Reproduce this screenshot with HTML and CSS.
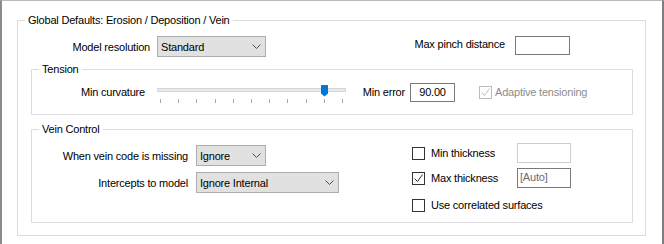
FILE: index.html
```html
<!DOCTYPE html>
<html>
<head>
<meta charset="utf-8">
<link rel="stylesheet" href="styles.css">
</head>
<body>
<div class="window">
  <div class="group main">
    <div class="group-title">Global Defaults: Erosion / Deposition / Vein</div>
    <div class="row row-top">
      <span class="lbl lbl-res">Model resolution</span>
      <div class="select sel-res"><span>Standard</span><svg viewBox="0 0 9 5"><path d="M0.5 0.5 L4.5 4.5 L8.5 0.5"/></svg></div>
      <span class="lbl lbl-pinch">Max pinch distance</span>
      <div class="input inp-pinch"></div>
    </div>
    <div class="group tension">
      <div class="group-title">Tension</div>
      <div class="row row-tension">
        <span class="lbl lbl-curv">Min curvature</span>
        <div class="slider">
          <div class="track"></div>
          <div class="ticks"><i></i><i></i><i></i><i></i><i></i><i></i><i></i><i></i><i></i><i></i><i></i></div>
          <svg class="thumb" viewBox="0 0 7 12"><path d="M0 0.5 Q0 0 0.5 0 H6.5 Q7 0 7 0.5 V8.5 L3.5 11.5 L0 8.5 Z"/></svg>
        </div>
        <span class="lbl lbl-err">Min error</span>
        <div class="input inp-err">90.00</div>
        <div class="check disabled check-adapt"><svg viewBox="0 0 11 11"><path d="M1.5 5.5 L4.5 8.5 L9.5 1.5"/></svg></div>
        <span class="chk-lbl muted">Adaptive tensioning</span>
      </div>
    </div>
    <div class="group vein">
      <div class="group-title">Vein Control</div>
      <div class="vein-body">
        <div class="vein-left">
          <div class="row vrow">
            <span class="lbl lbl-vein">When vein code is missing</span>
            <div class="select sel-ignore"><span>Ignore</span><svg viewBox="0 0 9 5"><path d="M0.5 0.5 L4.5 4.5 L8.5 0.5"/></svg></div>
          </div>
          <div class="row vrow vrow2">
            <span class="lbl lbl-vein">Intercepts to model</span>
            <div class="select sel-intercepts"><span>Ignore Internal</span><svg viewBox="0 0 9 5"><path d="M0.5 0.5 L4.5 4.5 L8.5 0.5"/></svg></div>
          </div>
        </div>
        <div class="vein-right">
          <div class="row crow">
            <div class="check"></div>
            <span class="chk-lbl thick-lbl">Min thickness</span>
            <div class="input inp-thick disabled-input"></div>
          </div>
          <div class="row crow crow2">
            <div class="check"><svg viewBox="0 0 11 11"><path d="M1.5 5.5 L4.5 8.5 L9.5 1.5"/></svg></div>
            <span class="chk-lbl thick-lbl">Max thickness</span>
            <div class="input inp-thick auto">[Auto]</div>
          </div>
          <div class="row crow crow3">
            <div class="check"></div>
            <span class="chk-lbl">Use correlated surfaces</span>
          </div>
        </div>
      </div>
    </div>
  </div>
</div>
</body>
</html>
```

FILE: styles.css
```css
* { box-sizing: border-box; }
html, body { margin: 0; padding: 0; background: #ffffff; }
body {
  font-family: "Liberation Sans", Arial, sans-serif;
  font-size: 11px;
  letter-spacing: -0.2px;
  color: #000000;
}
.window {
  width: 664px;
  height: 244px;
  border-top: 1px solid #b9b9bc;
  border-left: 2px solid #8a8b90;
  border-right: 2px solid #7d7e83;
  padding: 19px 0 0 15px;
  background: #ffffff;
  overflow: hidden;
}
.group { border: 1px solid #dcdcdc; }
.group-title {
  width: fit-content;
  margin: -9px 0 0 7px;
  padding: 0 3px;
  height: 16px;
  line-height: 16px;
  background: #ffffff;
  white-space: nowrap;
}
.main { width: 629px; height: 216px; }
.row { display: flex; align-items: center; }
.lbl { flex: none; text-align: right; white-space: nowrap; }

/* top row */
.row-top { margin-top: 8px; height: 21px; }
.lbl-res { width: 132px; margin-right: 7px; }
.select {
  flex: none;
  display: flex;
  align-items: center;
  justify-content: space-between;
  height: 21px;
  background: #e1e1e1;
  border: 1px solid #adadad;
  padding: 0 4px 0 3px;
  white-space: nowrap;
}
.select svg { width: 9px; height: 5px; flex: none; }
.select svg path { fill: none; stroke: #4d4d4d; stroke-width: 1; }
.sel-res { width: 109px; }
.lbl-pinch { width: 239px; margin-right: 10px; align-self: flex-start; line-height: 15px; margin-top: 1px; }
.input {
  flex: none;
  height: 19px;
  border: 1px solid #7a7a7a;
  background: #ffffff;
  line-height: 17px;
  white-space: nowrap;
}
.inp-pinch { width: 55px; align-self: flex-start; }

/* tension */
.tension { margin: 12px 12px 0 13px; height: 46px; }
.row-tension { margin-top: 3px; height: 24px; }
.lbl-curv { width: 113px; margin-right: 12px; }
.slider { position: relative; flex: none; width: 189px; height: 24px; }
.track {
  margin-top: 8px;
  height: 4px;
  border: 1px solid #d6d6d6;
  background: #e7eaea;
}
.ticks {
  display: flex;
  justify-content: space-between;
  margin-top: 7px;
  padding: 0 3px;
  height: 4px;
}
.ticks i { display: block; width: 1px; height: 4px; background: #a9a9a9; }
.thumb { position: absolute; left: 164px; top: 5px; width: 7px; height: 12px; }
.thumb path { fill: #0078d7; }
.lbl-err { width: 59px; margin-right: 5px; }
.inp-err { width: 45px; text-align: center; }
.check {
  flex: none;
  width: 13px;
  height: 13px;
  border: 1px solid #333333;
  background: #ffffff;
}
.check svg { display: block; width: 11px; height: 11px; }
.check svg path { fill: none; stroke: #333333; stroke-width: 1; }
.check.disabled { border-color: #bcbcbc; }
.check.disabled svg path { stroke: #bcbcbc; }
.check-adapt { margin-left: 24px; }
.chk-lbl { white-space: nowrap; margin-left: 3px; }
.muted { color: #8d8d8d; }

/* vein */
.vein { margin: 14px 12px 0 13px; height: 94px; }
.vein-body { display: flex; align-items: flex-start; }
.vein-left { width: 380px; flex: none; margin-top: 8px; }
.vrow { height: 21px; }
.vrow2 { margin-top: 6px; }
.lbl-vein { width: 156px; margin-right: 8px; }
.sel-ignore { width: 70px; }
.sel-intercepts { width: 143px; }
.vein-right { margin-top: 6px; }
.crow { height: 20px; }
.crow2 { margin-top: 5px; }
.crow3 { margin-top: 7px; }
.crow .chk-lbl { margin-left: 6px; }
.thick-lbl { width: 86px; }
.inp-thick { width: 54px; height: 20px; padding-left: 2px; }
.disabled-input { border-color: #cccccc; }
.auto { color: #6d6d6d; }
```
